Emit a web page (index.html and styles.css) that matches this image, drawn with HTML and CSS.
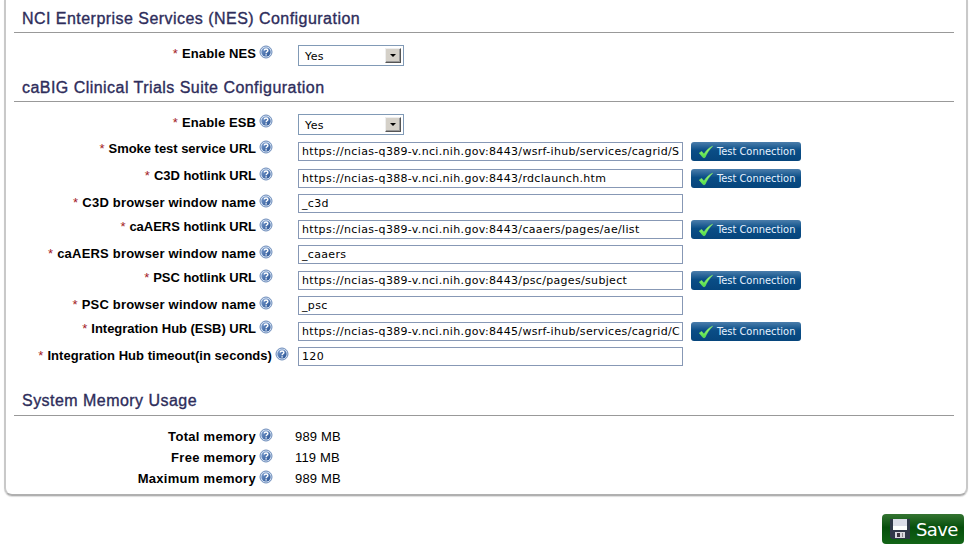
FILE: index.html
```
<!DOCTYPE html>
<html lang="en">
<head>
<meta charset="utf-8">
<title>Configuration</title>
<link rel="stylesheet" href="styles.css">
</head>
<body>
<svg width="0" height="0" class="defs" aria-hidden="true">
  <defs>
    <linearGradient id="ball" x1="0" y1="0" x2="1" y2="1"><stop offset="0" stop-color="#7d9fd0"/><stop offset="1" stop-color="#244f91"/></linearGradient>
    <linearGradient id="tick" x1="0" y1="0" x2="0" y2="1"><stop offset="0" stop-color="#b2ff83"/><stop offset="1" stop-color="#4be044"/></linearGradient>
    <symbol id="help" viewBox="0 0 14 14"><circle cx="7" cy="7" r="6" fill="#d5e2f3" stroke="#6d8cba"/><circle cx="7" cy="7" r="4.6" fill="url(#ball)"/><path d="M5.2 5.5C5.3 3.5 8.9 3.5 8.9 5.5C8.9 6.8 7.1 6.7 7.1 8.2M7.1 9.3V10.5" fill="none" stroke="#fff" stroke-width="1.4"/></symbol>
    <symbol id="check" viewBox="0 0 16 14"><path d="M1.3 8L3.7 6.4L6 9.2C8 5.6 10.8 2.8 14.6 1.2C11.4 4.5 8.7 8.3 6.9 12.6H5.1Z" fill="url(#tick)" stroke="#7dea60" stroke-width=".6"/></symbol>
  </defs>
</svg>
<main class="panel">
  <h2>NCI Enterprise Services (NES) Configuration</h2>
  <div class="fields nes">
    <div class="row select-row"><label><i>*</i> <b>Enable NES</b><svg><use href="#help"/></svg></label><div class="select"><span>Yes</span><em></em></div></div>
  </div>
  <h2 class="suite">caBIG Clinical Trials Suite Configuration</h2>
  <div class="fields esb">
    <div class="row select-row"><label><i>*</i> <b>Enable ESB</b><svg><use href="#help"/></svg></label><div class="select"><span>Yes</span><em></em></div></div>
    <div class="row first"><label><i>*</i> <b>Smoke test service URL</b><svg><use href="#help"/></svg></label><div class="input">https://ncias-q389-v.nci.nih.gov:8443/wsrf-ihub/services/cagrid/S</div><div class="test"><svg><use href="#check"/></svg><span>Test Connection</span></div></div>
    <div class="row"><label><i>*</i> <b>C3D hotlink URL</b><svg><use href="#help"/></svg></label><div class="input">https://ncias-q388-v.nci.nih.gov:8443/rdclaunch.htm</div><div class="test"><svg><use href="#check"/></svg><span>Test Connection</span></div></div>
    <div class="row plain"><label><i>*</i> <b>C3D browser window name</b><svg><use href="#help"/></svg></label><div class="input">_c3d</div></div>
    <div class="row"><label><i>*</i> <b>caAERS hotlink URL</b><svg><use href="#help"/></svg></label><div class="input">https://ncias-q389-v.nci.nih.gov:8443/caaers/pages/ae/list</div><div class="test"><svg><use href="#check"/></svg><span>Test Connection</span></div></div>
    <div class="row plain"><label><i>*</i> <b>caAERS browser window name</b><svg><use href="#help"/></svg></label><div class="input">_caaers</div></div>
    <div class="row"><label><i>*</i> <b>PSC hotlink URL</b><svg><use href="#help"/></svg></label><div class="input">https://ncias-q389-v.nci.nih.gov:8443/psc/pages/subject</div><div class="test"><svg><use href="#check"/></svg><span>Test Connection</span></div></div>
    <div class="row plain"><label><i>*</i> <b>PSC browser window name</b><svg><use href="#help"/></svg></label><div class="input">_psc</div></div>
    <div class="row"><label><i>*</i> <b>Integration Hub (ESB) URL</b><svg><use href="#help"/></svg></label><div class="input">https://ncias-q389-v.nci.nih.gov:8445/wsrf-ihub/services/cagrid/C</div><div class="test"><svg><use href="#check"/></svg><span>Test Connection</span></div></div>
    <div class="row plain wide"><label><i>*</i> <b>Integration Hub timeout(in seconds)</b><svg><use href="#help"/></svg></label><div class="input">120</div></div>
  </div>
  <h2 class="system">System Memory Usage</h2>
  <div class="fields memory">
    <div class="row"><label><b>Total memory</b><svg><use href="#help"/></svg></label><div class="value">989 MB</div></div>
    <div class="row"><label><b>Free memory</b><svg><use href="#help"/></svg></label><div class="value">119 MB</div></div>
    <div class="row"><label><b>Maximum memory</b><svg><use href="#help"/></svg></label><div class="value">989 MB</div></div>
  </div>
</main>
<div class="actions">
  <div class="save"><svg viewBox="0 0 20 20"><path d="M0 0H20V20H2L0 18Z" fill="#303849"/><path d="M3 0H17V11H3Z" fill="#dcdde9"/><path d="M3 7H17V11H3Z" fill="#fff"/><path d="M5 13H15V19H5Z" fill="#d9d9df"/><path d="M7 14H10V18H7Z" fill="#3d3440"/><path d="M12 14H13V18H12Z" fill="#8c8790"/></svg><span>Save</span></div>
</div>
</body>
</html>
```
FILE: styles.css
```
* { box-sizing: border-box; }
body { margin: 0; width: 976px; height: 550px; overflow: hidden; background: #fff; color: #000; font-family: "Liberation Sans", Arial, sans-serif; }
.defs { display: block; }
.panel { width: 964px; height: 496px; margin-left: 4px; padding: 5px 12px 0 8px; border: 2px solid #c9c9c9; border-top: 0; border-bottom-color: #b0b0b0; border-radius: 0 0 8px 8px; box-shadow: 0 1px 1px #ddd; }
h2 { margin: 0; height: 28px; padding-left: 8px; border-bottom: 1px solid #999; color: #2e2d5b; font-size: 16px; font-weight: 400; line-height: 27px; letter-spacing: .46px; -webkit-text-stroke: .35px #2e2d5b; white-space: nowrap; }
.system { line-height: 25px; }
.nes { height: 41px; padding-top: 12px; }
.esb { height: 286px; padding-top: 12px; }
.row { display: flex; align-items: flex-start; height: 25px; }
.select-row { height: 28px; }
.first { height: 27px; }
.plain { height: 26px; }
label { width: 259px; height: 19px; margin-right: 25px; display: flex; justify-content: flex-end; align-items: center; flex: none; font-size: 13px; line-height: 15px; letter-spacing: -.03px; white-space: pre; transform: translateY(-3px); }
label i { color: #a31a25; font-style: normal; margin-right: 4px; }
label svg { flex: none; width: 14px; height: 14px; margin-left: 3px; margin-bottom: 4px; }
.select-row label { transform: translateY(-1px); letter-spacing: .1px; }
.plain label { transform: translateY(-1px); letter-spacing: .2px; }
.wide label { width: 275px; margin-right: 9px; letter-spacing: .04px; }
.select { width: 106px; height: 21px; display: flex; justify-content: space-between; align-items: center; padding: 1px 2px 1px 6px; border: 1px solid #819ab6; font: 11px "DejaVu Sans", sans-serif; letter-spacing: .4px; }
.select span { padding-top: 2px; }
.select em { width: 16px; height: 15px; background: #d4d0c8; border: 1px solid; border-color: #eee #555 #555 #eee; box-shadow: inset -1px -1px #999; display: grid; place-items: center; }
.select em::before { content: ""; border: 3px solid transparent; border-top-color: #000; border-bottom: 0; }
.input { width: 385px; height: 19px; flex: none; overflow: hidden; padding: 1px 0 0 3px; border: 1px solid #8798b5; font: 11px/16px "DejaVu Sans", sans-serif; letter-spacing: .33px; white-space: nowrap; }
.test { width: 110px; height: 19px; flex: none; margin-left: 8px; padding: 0 0 1px 7px; display: flex; align-items: center; border-radius: 3px; background: linear-gradient(#4b7eac, #0a4d86 45%, #06457c); color: #e8f3ff; font: 11px "DejaVu Sans Condensed", "DejaVu Sans", sans-serif; letter-spacing: 0; white-space: nowrap; }
.test svg { flex: none; width: 16px; height: 14px; margin: 2px 3px 0 0; }
.memory { padding-top: 11px; }
.memory .row { height: 21px; }
.memory label { margin-right: 22px; transform: none; letter-spacing: .3px; }
.value { font-size: 13px; line-height: 19px; letter-spacing: .15px; }
.actions { display: flex; justify-content: flex-end; padding: 18px 12px 0 0; }
.save { width: 82px; height: 30px; display: flex; align-items: center; gap: 6px; padding-left: 8px; border-radius: 4px; background: linear-gradient(#347432, #064f0c 45%, #126416); color: #fff; font: 18px "DejaVu Sans", sans-serif; letter-spacing: -.6px; }
.save svg { flex: none; width: 20px; height: 20px; }
```
